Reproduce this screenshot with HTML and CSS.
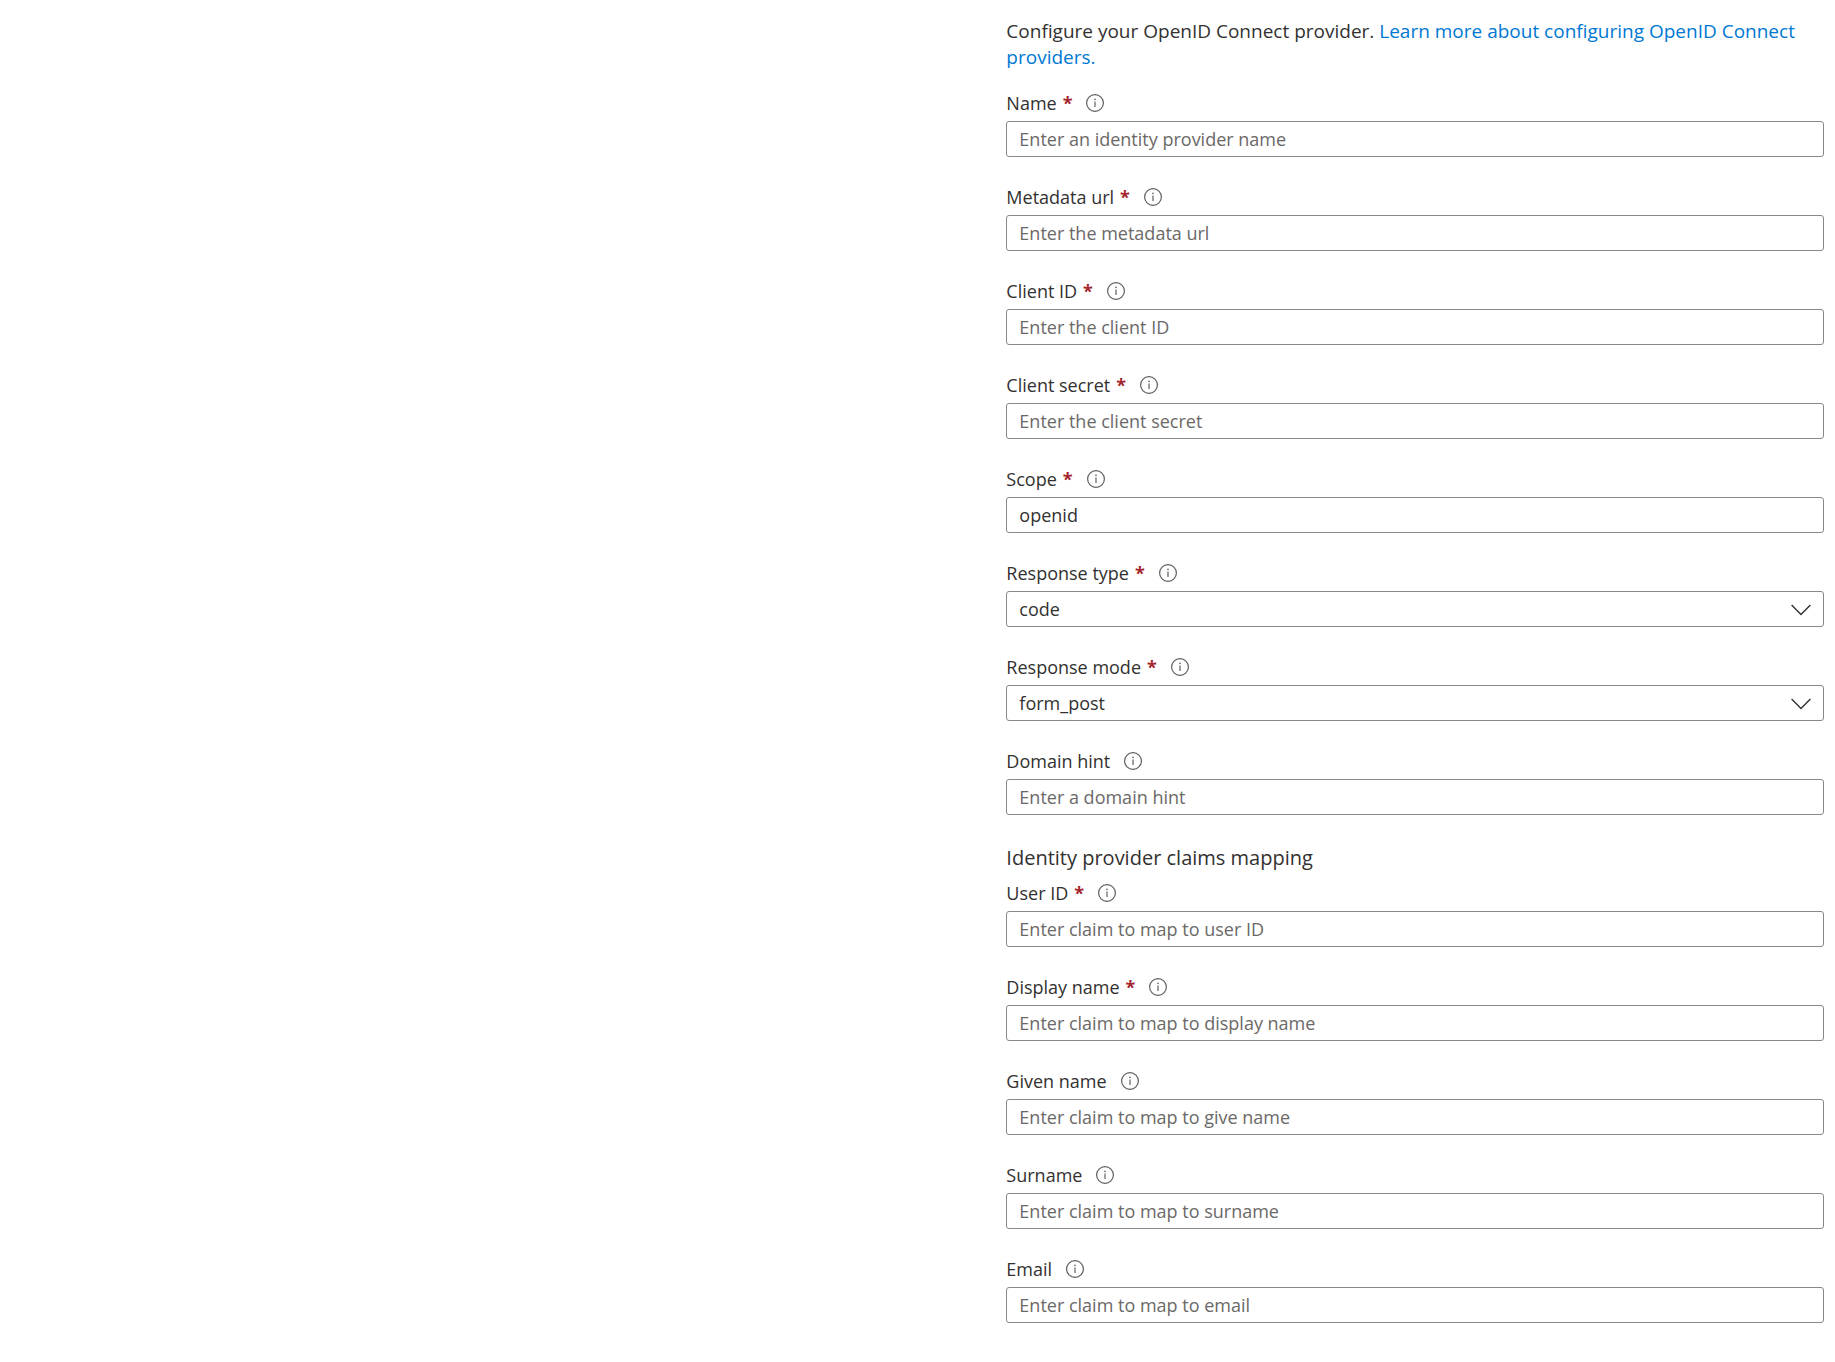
FILE: index.html
```html
<!DOCTYPE html>
<html lang="en">
<head>
  <meta charset="UTF-8" />
  <meta name="viewport" content="width=device-width, initial-scale=1" />
  <title>OpenID Connect provider</title>
  <link rel="stylesheet" href="styles.css">
</head>
<body>

  <!-- shared icons -->
  <svg class="icon-defs" aria-hidden="true">
    <symbol id="icon-info" viewBox="0 0 18 18">
      <circle cx="9" cy="9" r="8.4" fill="none" stroke="currentColor" stroke-width="1.2" />
      <path d="M9 7.4v5.6" fill="none" stroke="currentColor" stroke-width="1.2" />
      <circle cx="9" cy="5.4" r="0.8" fill="currentColor" />
    </symbol>
    <symbol id="icon-chevron" viewBox="0 0 20 12">
      <path d="M0.6 1l9.4 9.4L19.4 1" fill="none" stroke="currentColor" stroke-width="1.4" />
    </symbol>
  </svg>

  <form class="provider-form">
    <p class="intro">Configure your OpenID Connect provider. <a href="#">Learn more about configuring OpenID Connect providers.</a></p>

    <div class="fields">
      <div class="field">
        <label for="name">Name <span class="required">*</span> <svg class="info"><use href="#icon-info" /></svg></label>
        <input type="text" id="name" placeholder="Enter an identity provider name" />
      </div>
      <div class="field">
        <label for="metadataUrl">Metadata url <span class="required">*</span> <svg class="info"><use href="#icon-info" /></svg></label>
        <input type="text" id="metadataUrl" placeholder="Enter the metadata url" />
      </div>
      <div class="field">
        <label for="clientId">Client ID <span class="required">*</span> <svg class="info"><use href="#icon-info" /></svg></label>
        <input type="text" id="clientId" placeholder="Enter the client ID" />
      </div>
      <div class="field">
        <label for="clientSecret">Client secret <span class="required">*</span> <svg class="info"><use href="#icon-info" /></svg></label>
        <input type="text" id="clientSecret" placeholder="Enter the client secret" />
      </div>
      <div class="field">
        <label for="scope">Scope <span class="required">*</span> <svg class="info"><use href="#icon-info" /></svg></label>
        <input type="text" id="scope" value="openid" />
      </div>
      <div class="field">
        <label for="responseType">Response type <span class="required">*</span> <svg class="info"><use href="#icon-info" /></svg></label>
        <div class="select-box">
          <select id="responseType">
            <option>code</option>
          </select>
          <svg class="chevron"><use href="#icon-chevron" /></svg>
        </div>
      </div>
      <div class="field">
        <label for="responseMode">Response mode <span class="required">*</span> <svg class="info"><use href="#icon-info" /></svg></label>
        <div class="select-box">
          <select id="responseMode">
            <option>form_post</option>
          </select>
          <svg class="chevron"><use href="#icon-chevron" /></svg>
        </div>
      </div>
      <div class="field">
        <label for="domainHint">Domain hint <svg class="info"><use href="#icon-info" /></svg></label>
        <input type="text" id="domainHint" placeholder="Enter a domain hint" />
      </div>
    </div>

    <h2>Identity provider claims mapping</h2>

    <div class="fields">
      <div class="field">
        <label for="userId">User ID <span class="required">*</span> <svg class="info"><use href="#icon-info" /></svg></label>
        <input type="text" id="userId" placeholder="Enter claim to map to user ID" />
      </div>
      <div class="field">
        <label for="displayName">Display name <span class="required">*</span> <svg class="info"><use href="#icon-info" /></svg></label>
        <input type="text" id="displayName" placeholder="Enter claim to map to display name" />
      </div>
      <div class="field">
        <label for="givenName">Given name <svg class="info"><use href="#icon-info" /></svg></label>
        <input type="text" id="givenName" placeholder="Enter claim to map to give name" />
      </div>
      <div class="field">
        <label for="surname">Surname <svg class="info"><use href="#icon-info" /></svg></label>
        <input type="text" id="surname" placeholder="Enter claim to map to surname" />
      </div>
      <div class="field">
        <label for="email">Email <svg class="info"><use href="#icon-info" /></svg></label>
        <input type="text" id="email" placeholder="Enter claim to map to email" />
      </div>
    </div>
  </form>

</body>
</html>
```
FILE: styles.css
```css
* {
  box-sizing: border-box;
}

body {
  margin: 0;
  padding: 18px 11px 36px;
  background: #ffffff;
  color: #323130;
  font-family: "Segoe UI", "Open Sans", sans-serif;
  font-size: 18px;
  line-height: 24px;
}

.icon-defs {
  display: none;
}

.provider-form {
  width: 45.1%;
  margin-left: auto;
}

.intro {
  margin: 0 0 21px;
  font-size: 19px;
  line-height: 26px;
}

a {
  color: #0078d4;
  text-decoration: none;
}

a:hover {
  text-decoration: underline;
}

h2 {
  margin: 30px 0 10px;
  font-size: 20px;
  font-weight: 400;
  line-height: 26px;
}

.fields {
  display: flex;
  flex-direction: column;
  gap: 28px;
}

.field {
  display: flex;
  flex-direction: column;
  gap: 6px;
}

label {
  display: flex;
  align-items: center;
}

.required {
  margin-left: 6px;
  color: #a4262c;
  font-weight: 700;
}

.info {
  width: 18px;
  height: 18px;
  margin-left: 14px;
  color: #605e5c;
}

input, select {
  width: 100%;
  height: 36px;
  padding: 0 12px;
  border: 1px solid #8a8886;
  border-radius: 3px;
  background: #ffffff;
  color: #323130;
  font: inherit;
}

input::placeholder {
  color: #6b6967;
}

input:focus, select:focus {
  outline: 1px solid #0078d4;
}

.select-box {
  position: relative;
}

select {
  display: block;
  appearance: none;
}

.chevron {
  position: absolute;
  top: 13px;
  right: 13px;
  width: 20px;
  height: 12px;
  color: #323130;
  pointer-events: none;
}
```
